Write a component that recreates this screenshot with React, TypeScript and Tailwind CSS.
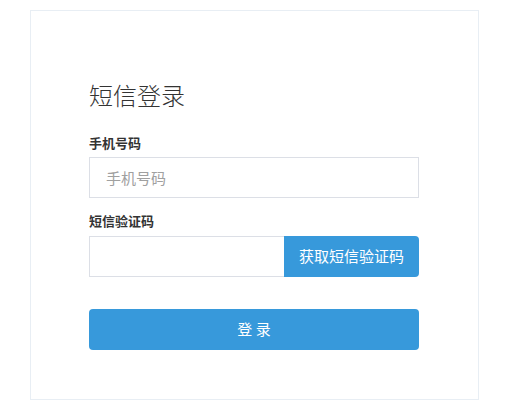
import React from 'react';

const cjk = { fontFamily: '"Noto Sans CJK SC", "Noto Sans", sans-serif' };

export default function App() {
  return (
    <div className="min-h-screen bg-white pt-[10px]" style={cjk}>
      {/* Login card */}
      <div className="ml-[30px] w-[449px] border border-[#e8eef4] px-[58px] pt-[69px] pb-[49px]">
        <h1 className="text-[24px] leading-[30px] font-light text-[#333]">短信登录</h1>

        <label className="mt-[23px] block text-[13px] leading-[20px] font-bold text-[#333]">
          手机号码
        </label>
        <input
          type="text"
          placeholder="手机号码"
          className="mt-[4px] block h-[41px] w-[330px] border border-[#dcdfe6] px-[16px] text-[15px] text-[#333] outline-none placeholder:text-[#a0a0a0]"
        />

        <label className="mt-[13px] block text-[13px] leading-[20px] font-bold text-[#333]">
          短信验证码
        </label>
        <div className="mt-[5px] flex h-[41px] w-[330px]">
          <input
            type="text"
            className="h-full min-w-0 flex-1 border border-r-0 border-[#dcdfe6] px-[16px] text-[15px] outline-none"
          />
          <button className="h-full w-[135px] rounded-r-[4px] bg-[#3799db] text-[15px] text-white">
            获取短信验证码
          </button>
        </div>

        <button className="mt-[32px] block h-[41px] w-[330px] rounded-[4px] bg-[#3799db] text-[15px] text-white">
          登 录
        </button>
      </div>
    </div>
  );
}
